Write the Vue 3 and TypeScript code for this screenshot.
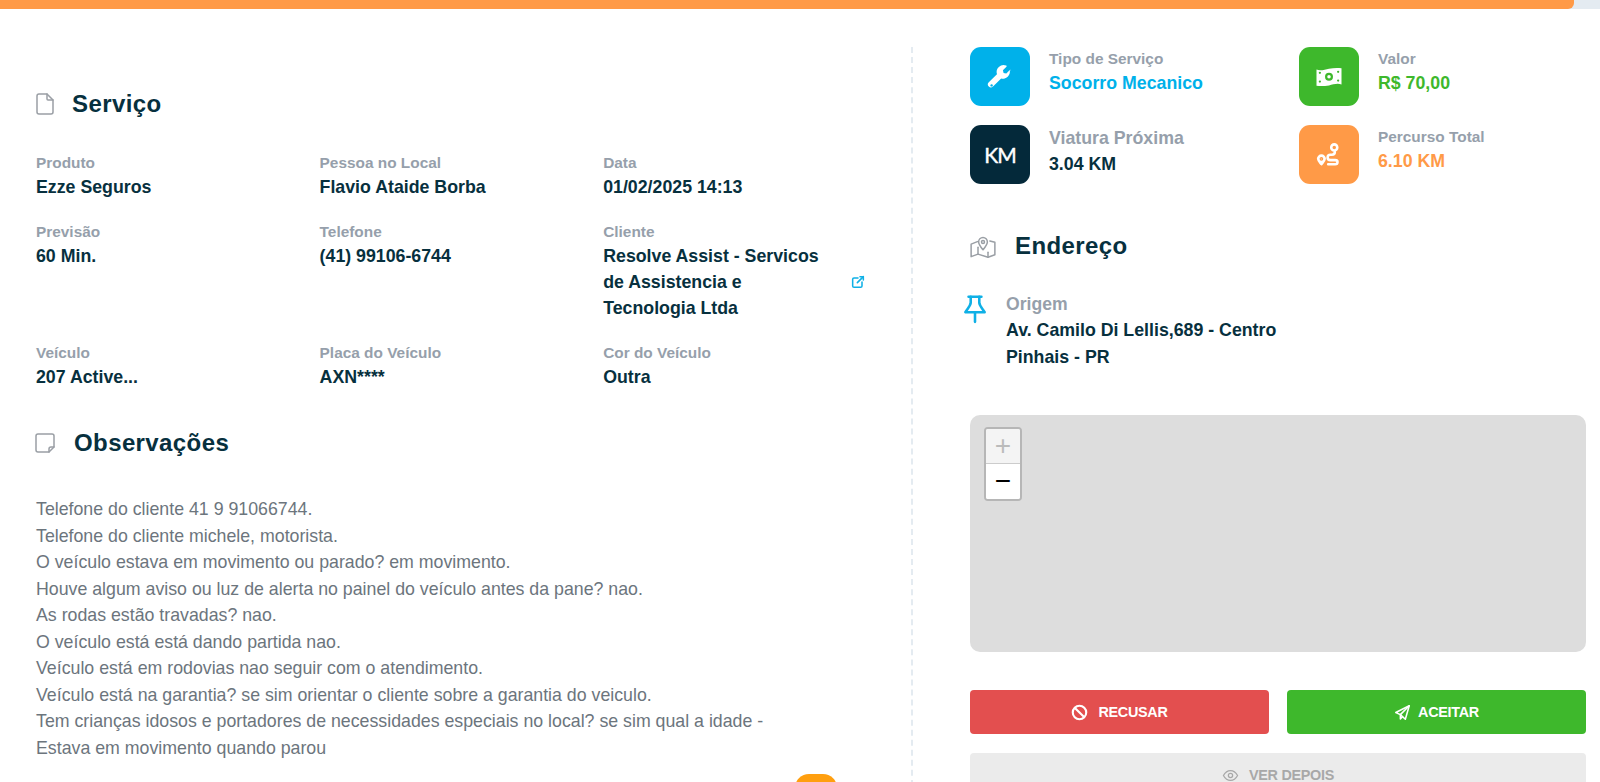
<script setup lang="ts">
const fields = [
  { label: 'Produto', value: 'Ezze Seguros' },
  { label: 'Pessoa no Local', value: 'Flavio Ataide Borba' },
  { label: 'Data', value: '01/02/2025 14:13' },
  { label: 'Previsão', value: '60 Min.' },
  { label: 'Telefone', value: '(41) 99106-6744' },
  { label: 'Cliente', value: 'Resolve Assist - Servicos de Assistencia e Tecnologia Ltda', link: true },
  { label: 'Veículo', value: '207 Active...' },
  { label: 'Placa do Veículo', value: 'AXN****' },
  { label: 'Cor do Veículo', value: 'Outra' },
]

const notes = [
  'Telefone do cliente 41 9 91066744.',
  'Telefone do cliente michele, motorista.',
  'O veículo estava em movimento ou parado? em movimento.',
  'Houve algum aviso ou luz de alerta no painel do veículo antes da pane? nao.',
  'As rodas estão travadas? nao.',
  'O veículo está está dando partida nao.',
  'Veículo está em rodovias nao seguir com o atendimento.',
  'Veículo está na garantia? se sim orientar o cliente sobre a garantia do veiculo.',
  'Tem crianças idosos e portadores de necessidades especiais no local? se sim qual a idade -',
  'Estava em movimento quando parou',
]
</script>

<template>
  <div class="page">
    <div class="progress"><div class="progress-fill"></div></div>
    <div class="columns">
      <section class="left">
        <div class="heading service-heading">
          <svg class="head-icon" width="24" height="24" viewBox="0 0 24 24" fill="none" stroke="#9a9fa5" stroke-width="1.5" stroke-linecap="round" stroke-linejoin="round">
            <path d="M14 2v5a1 1 0 0 0 1 1h5" />
            <path d="M18 22H6a2 2 0 0 1-2-2V4a2 2 0 0 1 2-2h8l6 6v12a2 2 0 0 1-2 2z" />
          </svg>
          <h2>Serviço</h2>
        </div>
        <div class="grid">
          <div v-for="f in fields" :key="f.label" class="field">
            <div class="label">{{ f.label }}</div>
            <div v-if="f.link" class="value client">
              <span class="client-name">{{ f.value }}</span>
              <svg class="ext" width="16" height="16" viewBox="0 0 24 24" fill="none" stroke="#0fb0e6" stroke-width="2.300" stroke-linecap="round" stroke-linejoin="round">
                <path d="M12 6H6a2 2 0 0 0-2 2v10a2 2 0 0 0 2 2h10a2 2 0 0 0 2-2v-6" />
                <path d="M11 13l9-9" />
                <path d="M15 4h5v5" />
              </svg>
            </div>
            <div v-else class="value">{{ f.value }}</div>
          </div>
        </div>
        <div class="heading notes-heading">
          <svg class="head-icon" width="24" height="24" viewBox="0 0 24 24" fill="none" stroke="#9a9fa5" stroke-width="1.5" stroke-linecap="round" stroke-linejoin="round">
            <path d="M16 21H5a2 2 0 0 1-2-2V5a2 2 0 0 1 2-2h14a2 2 0 0 1 2 2v11l-5 5z" />
            <path d="M16 21v-3a2 2 0 0 1 2-2h3" />
          </svg>
          <h2>Observações</h2>
        </div>
        <div class="notes">
          <div v-for="n in notes" :key="n">{{ n }}</div>
        </div>
        <div class="fab-row"><div class="fab"><span class="fab-dot"></span></div></div>
      </section>

      <section class="right">
        <div class="stats">
          <div class="stat">
            <div class="tile blue">
              <svg width="28" height="28" viewBox="0 0 24 24">
                <path fill="#fff" d="M21.400 6.300a.6.6 0 0 0-1-.2l-3 3-2.300-.6-.6-2.300 3-3a.6.6 0 0 0-.2-1 6 6 0 0 0-7.900 7.400l-7 7a2.500 2.500 0 0 0 3.600 3.600l7-7a6 6 0 0 0 7.400-6.900z" />
                <circle cx="4.800" cy="19.200" r="1" fill="#00b1ea" />
              </svg>
            </div>
            <div class="stat-text first">
              <div class="label">Tipo de Serviço</div>
              <div class="value blue-text">Socorro Mecanico</div>
            </div>
          </div>
          <div class="stat">
            <div class="tile green">
              <svg width="30" height="30" viewBox="0 0 24 24">
                <path fill="#fff" d="M2 6c3.300 1.300 6.700-.1 10-.7 3.300-.5 6.700-.7 10-.3v13c-3.300-1.300-6.700.1-10 .7-3.300.5-6.700.7-10 .3z" />
                <circle cx="12" cy="11.700" r="3.200" fill="#3eb82c" />
                <circle cx="12" cy="11.700" r="1.400" fill="#fff" />
                <circle cx="4.700" cy="8.600" r=".9" fill="#3eb82c" />
                <circle cx="19.300" cy="7.800" r=".9" fill="#3eb82c" />
                <circle cx="4.700" cy="15.600" r=".9" fill="#3eb82c" />
                <circle cx="19.300" cy="14.800" r=".9" fill="#3eb82c" />
              </svg>
            </div>
            <div class="stat-text first">
              <div class="label">Valor</div>
              <div class="value green-text">R$ 70,00</div>
            </div>
          </div>
          <div class="stat">
            <div class="tile navy"><span class="km">KM</span></div>
            <div class="stat-text">
              <div class="label big">Viatura Próxima</div>
              <div class="value">3.04 KM</div>
            </div>
          </div>
          <div class="stat">
            <div class="tile orange">
              <svg width="28" height="28" viewBox="0 0 24 24" fill="none" stroke="#fff" stroke-width="2.200" stroke-linecap="round" stroke-linejoin="round">
                <circle cx="16.500" cy="5.500" r="2.600" />
                <path d="M17 9.500c0 1.500-1 2.300-2.500 2.300h-1.200c-1.500 0-2.500 1-2.500 2.300s1 2.300 2.500 2.300h4c1.300 0 2 .8 2 1.700s-.7 1.900-2 1.900h-6" />
                <path fill="#fff" d="M5.500 12.500a2.800 2.800 0 0 1 2.800 2.800c0 1.500-1.600 3-2.800 4.500-1.200-1.500-2.800-3-2.800-4.500a2.800 2.800 0 0 1 2.800-2.800z" />
                <circle cx="5.500" cy="15.300" r=".5" fill="#ff9a47" stroke="#ff9a47" />
              </svg>
            </div>
            <div class="stat-text">
              <div class="label">Percurso Total</div>
              <div class="value orange-text">6.10 KM</div>
            </div>
          </div>
        </div>

        <div class="heading address-heading">
          <svg class="head-icon" width="30" height="30" viewBox="0 0 24 24" fill="none" stroke="#9a9fa5" stroke-width="1.200" stroke-linecap="round" stroke-linejoin="round">
            <path d="M7.500 8.500 2.500 10.500v10l5.500-2 8 2.500 5.500-2v-10l-4-1" />
            <path d="M8 18.500V13" />
            <path d="M16 21v-4" />
            <path d="M12 15c-2-2.500-3.500-4.300-3.500-6.300a3.500 3.500 0 0 1 7 0c0 2-1.500 3.800-3.500 6.300z" />
            <circle cx="12" cy="8.700" r="1.200" />
          </svg>
          <h2>Endereço</h2>
        </div>

        <div class="origin">
          <svg class="pin" width="26" height="30" viewBox="0 0 24 28" fill="none" stroke="#0fb0e6" stroke-width="2.400" stroke-linecap="round" stroke-linejoin="round">
            <path d="M6 2.500h12" />
            <path d="M8 2.500v5.500c0 3-3 5.500-5 9h18c-2-3.500-5-6-5-9V2.500" />
            <path d="M12 17v9" />
          </svg>
          <div>
            <div class="label">Origem</div>
            <div class="value">Av. Camilo Di Lellis,689 - Centro</div>
            <div class="value">Pinhais - PR</div>
          </div>
        </div>

        <div class="map">
          <div class="zoom">
            <div class="zoom-btn disabled">+</div>
            <div class="zoom-btn">−</div>
          </div>
        </div>

        <div class="actions">
          <button class="btn red">
            <svg width="17" height="17" viewBox="0 0 24 24" fill="none" stroke="#fff" stroke-width="3" stroke-linecap="round">
              <circle cx="12" cy="12" r="9.500" />
              <path d="M5.500 5.500l13 13" />
            </svg>
            <span>RECUSAR</span>
          </button>
          <button class="btn go">
            <svg width="17" height="17" viewBox="0 0 24 24" fill="none" stroke="#fff" stroke-width="2.200" stroke-linecap="round" stroke-linejoin="round">
              <path d="M21.500 2.500 9 15" />
              <path d="M21.500 2.500 16 21.500l-7-6.500-6.500-3z" />
              <path d="M9 15v6l3-3" />
            </svg>
            <span>ACEITAR</span>
          </button>
          <button class="btn later">
            <svg width="17" height="17" viewBox="0 0 24 24" fill="none" stroke="#a8a8a8" stroke-width="1.800">
              <path d="M2 12c2.500-4.500 6-7 10-7s7.500 2.500 10 7c-2.500 4.500-6 7-10 7s-7.500-2.500-10-7z" />
              <circle cx="12" cy="12" r="3" />
            </svg>
            <span>VER DEPOIS</span>
          </button>
        </div>
      </section>
    </div>
  </div>
</template>

<style>
html, body {
  overflow: hidden;
  background: #fff;
}
</style>

<style scoped>
.page {
  height: 782px;
  overflow: hidden;
  font-family: "Liberation Sans", Arial, sans-serif;
  color: #07303e;
}

.progress {
  height: 9px;
  background: #e4ebf1;
}

.progress-fill {
  width: 1574px;
  height: 100%;
  background: #ff9a47;
  border-radius: 0 0 6px 0;
}

.columns {
  display: flex;
  margin-top: 38px;
}

.left {
  width: 875px;
  padding: 0 0 0 36px;
  border-right: 2px dashed #e4ebf1;
  flex: none;
}

.right {
  width: 616px;
  margin-left: 57px;
  flex: none;
}

.heading {
  display: flex;
  align-items: center;
}

.heading h2 {
  margin: 0;
  font-size: 24px;
  line-height: 32px;
  font-weight: 700;
  letter-spacing: .4px;
}

.head-icon {
  flex: none;
}

.service-heading {
  margin-top: 41px;
  gap: 15px;
  margin-left: -3px;
}

.notes-heading {
  margin-top: 37px;
  gap: 17px;
  margin-left: -3px;
}

.address-heading {
  margin-top: 45.500px;
  gap: 17px;
  margin-left: -2px;
}

.grid {
  display: grid;
  grid-template-columns: repeat(3, 283.600px);
  row-gap: 19px;
  margin-top: 31px;
}

.label {
  font-size: 15.400px;
  line-height: 23.100px;
  font-weight: 700;
  color: #969fab;
}

.label.big {
  font-size: 17.750px;
  line-height: 26.400px;
}

.value {
  font-size: 17.750px;
  line-height: 26.400px;
  font-weight: 700;
  color: #07303e;
}

.client {
  display: flex;
  align-items: center;
  justify-content: space-between;
  width: 263px;
}

.client-name {
  width: 225px;
}

.ext {
  flex: none;
}

.notes {
  margin-top: 37px;
  font-size: 17.750px;
  line-height: 26.500px;
  color: #6c757d;
}

.fab-row {
  display: flex;
  justify-content: flex-end;
  margin-top: 13px;
  padding-right: 74px;
}

.fab {
  width: 42px;
  height: 42px;
  border-radius: 14px;
  background: #ff9f0f;
  display: flex;
  justify-content: center;
  padding-top: 8px;
  box-sizing: border-box;
}

.fab-dot {
  width: 3px;
  height: 3px;
  background: #fff;
}

.stats {
  display: grid;
  grid-template-columns: 329px 1fr;
  row-gap: 19px;
}

.stat {
  display: flex;
  gap: 19px;
  align-items: flex-start;
}

.tile {
  width: 60px;
  height: 59px;
  border-radius: 11px;
  display: flex;
  align-items: center;
  justify-content: center;
  flex: none;
}

.blue { background: #00b1ea; }
.green { background: #3eb82c; }
.navy { background: #04293a; }
.orange { background: #ff9a47; }

.km {
  font-family: Lato, sans-serif;
  font-size: 21px;
  font-weight: 400;
  color: #fff;
  letter-spacing: -1px;
  -webkit-text-stroke: .4px #fff;
}

.blue-text { color: #00b1ea; }
.green-text { color: #3eb82c; }
.orange-text { color: #ff9a47; }

.origin {
  display: flex;
  gap: 18px;
  margin-top: 29.500px;
  margin-left: -8px;
}

.pin {
  flex: none;
  margin-top: 3px;
}

.origin .label {
  font-size: 17.600px;
  line-height: 26.400px;
}

.map {
  height: 237px;
  margin-top: 45px;
  background: #dddddd;
  border-radius: 10px;
  padding: 12px 14px;
  box-sizing: border-box;
}

.zoom {
  width: 38px;
  border: 2px solid #b6b6b6;
  border-radius: 4px;
  background: #fff;
  overflow: hidden;
  box-sizing: border-box;
}

.zoom-btn {
  height: 35px;
  line-height: 33px;
  text-align: center;
  font-size: 28px;
  font-weight: 400;
  color: #000;
  background: #fff;
}

.zoom-btn.disabled {
  color: #bbb;
  background: #f4f4f4;
  border-bottom: 1px solid #ccc;
  box-sizing: border-box;
}

.actions {
  display: grid;
  grid-template-columns: 1fr 1fr;
  column-gap: 18px;
  row-gap: 19px;
  margin-top: 38px;
}

.btn {
  height: 44px;
  border: none;
  border-radius: 4px;
  display: flex;
  align-items: center;
  justify-content: center;
  gap: 10px;
  font-family: inherit;
  font-size: 14.400px;
  font-weight: 700;
  color: #fff;
  letter-spacing: -.3px;
}

.red { background: #e34f4f; }

.go {
  background: #3eb82c;
  gap: 7px;
}

.later {
  grid-column: 1 / 3;
  background: #ebebeb;
  color: #a8a8a8;
}
</style>
